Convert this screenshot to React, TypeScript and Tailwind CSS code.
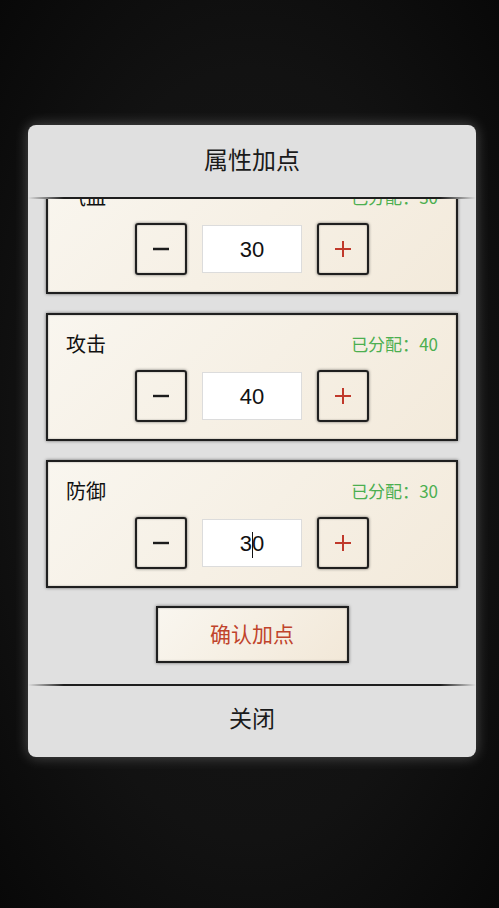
import { useLayoutEffect, useRef } from "react";

const stats = [
	{ name: "气血", value: 30 },
	{ name: "攻击", value: 40 },
	{ name: "防御", value: 30, focused: true },
];

const inkLine = "h-[2px] bg-[linear-gradient(90deg,transparent,#1e1e1e_8%,#1e1e1e_92%,transparent)]";
const inkBorder = "border-2 border-[#1f1f1f] shadow-[0_0_3px_rgba(0,0,0,0.55),inset_0_0_2px_rgba(0,0,0,0.35)]";

function StepButton({ kind }: { kind: "minus" | "plus" }) {
	const color = kind === "plus" ? "#c0392b" : "#1c1c1c";
	return (
		<button className={`w-[52px] h-[52px] flex items-center justify-center rounded-[3px] bg-transparent ${inkBorder}`}>
			<svg width="18" height="18" viewBox="0 0 18 18" fill="none" stroke={color} strokeWidth={kind === "plus" ? 2 : 2.4}>
				<line x1="1" y1="9" x2="17" y2="9" />
				{kind === "plus" && <line x1="9" y1="1" x2="9" y2="17" />}
			</svg>
		</button>
	);
}

function StatCard({ name, value, focused }: { name: string; value: number; focused?: boolean }) {
	return (
		<div className={`h-[128px] shrink-0 bg-[linear-gradient(135deg,#f9f6ef,#f3eadb)] px-[18px] pt-[14px] ${inkBorder}`}>
			<div className="flex items-center justify-between h-[30px]">
				<span className="text-[20px] text-[#111]">{name}</span>
				<span className="text-[17px] text-[#4caf50]">已分配：{value}</span>
			</div>
			<div className="flex items-center justify-center gap-[15px] mt-[11px]">
				<StepButton kind="minus" />
				<div className="relative w-[100px] h-[48px] bg-white border border-[#dcdcdc] flex items-center justify-center">
					<span className="text-[22px] text-[#111] font-['Liberation_Sans',sans-serif]">{value}</span>
					{focused && <span className="absolute left-[49px] top-[12px] w-[1px] h-[26px] bg-[#111]" />}
				</div>
				<StepButton kind="plus" />
			</div>
		</div>
	);
}

export default function App() {
	const scrollRef = useRef<HTMLDivElement>(null);

	useLayoutEffect(() => {
		const el = scrollRef.current;
		if (el) el.scrollTop = el.scrollHeight;
	}, []);

	return (
		<div className="w-full min-h-[908px] bg-[radial-gradient(ellipse_at_center,#171717_0%,#121212_60%,#080808_100%)] pt-[125px] pl-[28px] font-['Noto_Sans_CJK_SC',sans-serif]">
			<div className="w-[448px] h-[632px] rounded-[8px] bg-[#e0e0e0] shadow-[0_0_14px_rgba(255,255,255,0.28)] flex flex-col overflow-hidden">
				{/* Header */}
				<div className="h-[72px] shrink-0 flex items-center justify-center pb-[4px]">
					<h2 className="text-[24px] text-[#1a1a1a]">属性加点</h2>
				</div>
				<div className={inkLine} />

				{/* Stat list */}
				<div ref={scrollRef} className="flex-1 overflow-y-auto [scrollbar-width:none] px-[18px] pt-[19px] pb-[21px]">
					<div className="flex flex-col gap-[19px]">
						{stats.map((s) => (
							<StatCard key={s.name} {...s} />
						))}
					</div>
					<div className="flex justify-center mt-[18px]">
						<button className={`w-[193px] h-[57px] bg-[linear-gradient(135deg,#f9f6ef,#f2e8d8)] text-[21px] text-[#c0432b] pb-[2px] ${inkBorder}`}>
							确认加点
						</button>
					</div>
				</div>

				{/* Footer */}
				<div className={inkLine} />
				<div className="h-[71px] shrink-0 flex items-center justify-center pb-[8px]">
					<span className="text-[23px] text-[#1a1a1a]">关闭</span>
				</div>
			</div>
		</div>
	);
}
